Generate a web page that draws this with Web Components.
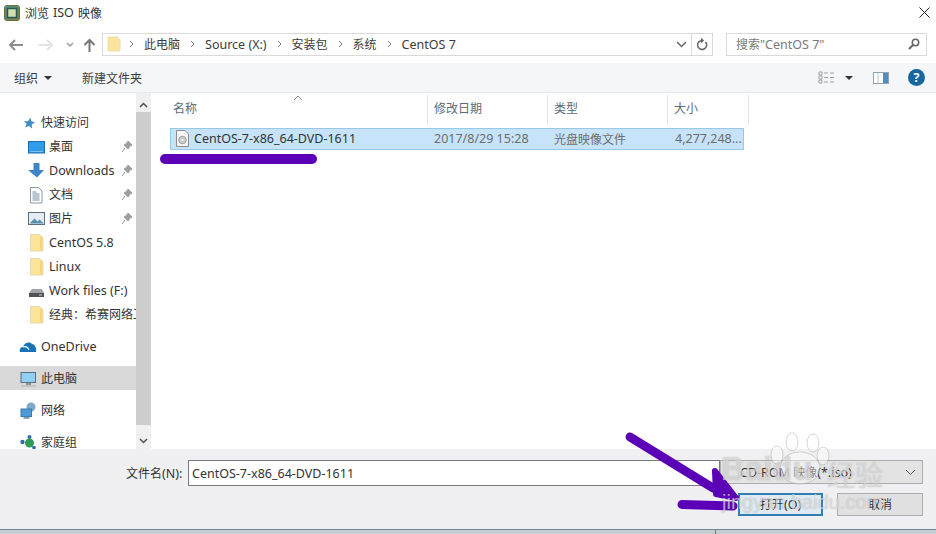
<!DOCTYPE html>
<html lang="zh">
<head>
<meta charset="utf-8">
<title>浏览 ISO 映像</title>
<style>
  html, body { margin: 0; height: 100%; overflow: hidden; background: #fff; }
  body { font: 12.5px "Noto Sans", "Noto Sans CJK SC", sans-serif; color: #333; }
</style>
</head>
<body>
<iso-dialog>
  <title-bar slot="title"></title-bar>
  <address-row slot="address"></address-row>
  <tool-bar slot="tools"></tool-bar>
  <nav-pane slot="nav">
    <nav-item icon="star" top>快速访问</nav-item>
    <nav-item icon="desktop" sub pin>桌面</nav-item>
    <nav-item icon="download" sub pin>Downloads</nav-item>
    <nav-item icon="doc" sub pin>文档</nav-item>
    <nav-item icon="pic" sub pin>图片</nav-item>
    <nav-item icon="folder" sub>CentOS 5.8</nav-item>
    <nav-item icon="folder" sub>Linux</nav-item>
    <nav-item icon="drive" sub>Work files (F:)</nav-item>
    <nav-item icon="folder" sub>经典：希赛网络工程师</nav-item>
    <nav-item icon="cloud" top gap>OneDrive</nav-item>
    <nav-item icon="pc" top gap selected>此电脑</nav-item>
    <nav-item icon="net" top gap>网络</nav-item>
    <nav-item icon="home" top gap>家庭组</nav-item>
  </nav-pane>
  <file-list slot="files"></file-list>
  <footer-bar slot="footer"></footer-bar>
  <mark-up slot="marks"></mark-up>
</iso-dialog>

<script>
const ICONS = {
  star: '<path d="M10.500 3.500l.8 3.700 3.700 1-3.200 2.200.2 4-3-2.400-3.800 1.500 1.400-3.700L4 7l4 .2z" fill="#3f8fc9"/>',
  desktop: '<rect x="-.5" y="3.500" width="16" height="11.500" fill="#2f9be9" stroke="#1f6fae"/><path d="M1 13.500h13" stroke="#7cc0ee"/>',
  download: '<path d="M4.500 1h6v7H15l-7 7.500L-1 8h5.500z" fill="#3c85c6"/>',
  doc: '<path d="M1.500 1.500h8l3.500 3.500v12h-11.500z" fill="#fff" stroke="#8b9aa6"/><path d="M3.500 6h4M3.500 8h7M3.500 10h7M3.500 12h7M3.500 14h7" stroke="#6f8ea5"/>',
  pic: '<rect x="-.5" y="2.500" width="16" height="12" fill="#e4edf3" stroke="#5f6d79"/><path d="M.5 13.500l5-5 3 3 2-2 4.500 4z" fill="#5f8fb0"/>',
  folder: '<path d="M1.500 .5H10l4 3V17H1.500z" fill="#fbe59c" stroke="#e8d8a2"/><path d="M12 3v13" stroke="#f5d67a" stroke-width="2"/>',
  drive: '<path d="M3 7h10l2 4v4H0v-4z" fill="#a0a4a8"/><rect x="0" y="11" width="15" height="4" fill="#4f5357"/><path d="M10 13h3" stroke="#c9ccd0"/>',
  cloud: '<path d="M0 14c-1-3 1-5 3-5 1-4 6-6 9-3 2 0 5 3 4 8z" fill="#1773b8"/><path d="M3 9c3-1 5 0 6 3" stroke="#fff" stroke-width="1.200" fill="none"/>',
  pc: '<rect x="1" y="2.500" width="14.500" height="10" fill="#8fd0f3" stroke="#5a6f80"/><path d="M6 14h5" stroke="#6f7a84" stroke-width="1.500"/><path d="M1 16h15" stroke="#a9b0b6"/>',
  net: '<circle cx="11" cy="5" r="4.500" fill="#7fa9cb"/><rect x="1" y="7" width="10.500" height="7.500" fill="#4d9bd6" stroke="#3a7cae"/><path d="M3.500 16h6" stroke="#63859f" stroke-width="1.500"/>',
  home: '<circle cx="2.500" cy="8" r="2.200" fill="#2f6ea5"/><circle cx="9.500" cy="3" r="2" fill="#2f6ea5"/><circle cx="9.500" cy="9" r="4.500" fill="#2f9b58"/><circle cx="14" cy="13.500" r="1.800" fill="#2f6ea5"/>'
};

class IsoDialog extends HTMLElement {
  constructor() {
    super();
    this.attachShadow({ mode: 'open' });
    this.shadowRoot.innerHTML = `
      <style>
        :host { display: grid; position: relative; width: 936px; height: 534px; overflow: hidden;
          grid-template: 33px 30px 30px 356px 80px 5px / 152px 1fr; }
        ::slotted([slot=title]), ::slotted([slot=address]), ::slotted([slot=tools]), ::slotted([slot=footer]) { grid-column: 1 / 3; }
        .strip { grid-column: 1 / 3; display: grid; grid-template-columns: 715px 1fr;
          background: #c9ccce; border-top: 1px solid #6c8899; box-sizing: border-box; }
        .strip i { border-left: 1px solid #777; grid-column: 2; }
      </style>
      <slot name="title"></slot>
      <slot name="address"></slot>
      <slot name="tools"></slot>
      <slot name="nav"></slot>
      <slot name="files"></slot>
      <slot name="footer"></slot>
      <div class="strip"><i></i></div>
      <slot name="marks"></slot>
    `;
  }
}

class TitleBar extends HTMLElement {
  constructor() {
    super();
    this.attachShadow({ mode: 'open' });
    this.shadowRoot.innerHTML = `
      <style>
        :host { display: flex; align-items: center; height: 25px; padding: 0 6px 0 4px; gap: 5px; color: #333; }
        .name { flex: 1; font-size: 12px; display: flex; gap: 4px; }
        svg { display: block; }
      </style>
      <svg width="16" height="16" viewBox="0 0 16 16">
        <defs><linearGradient id="fr" x1="0" y1="0" x2="1" y2="1"><stop offset="0" stop-color="#3f9a92"/><stop offset="1" stop-color="#8a7a3c"/></linearGradient></defs>
        <rect x=".5" y=".5" width="15" height="15" rx="2.500" fill="url(#fr)" stroke="#6f6a3f"/>
        <rect x="3.500" y="3.500" width="9" height="9" fill="#d4dfb0" stroke="#245a55" stroke-width="1.500"/>
      </svg>
      <div class="name"><span>浏览</span><span style="font-size:12.5px">ISO</span><span>映像</span></div>
      <svg width="11" height="11" viewBox="0 0 11 11"><path d="M.5 .5l10 10M10.500 .5l-10 10" stroke="#222" fill="none"/></svg>
    `;
  }
}

class AddressRow extends HTMLElement {
  constructor() {
    super();
    this.attachShadow({ mode: 'open' });
    const crumbs = ['此电脑', 'Source (X:)', '安装包', '系统', 'CentOS 7'];
    const crumb = c => `<svg width="5" height="8" viewBox="0 0 5 8"><path d="M1 1l3 3-3 3" stroke="#777" fill="none"/></svg><span class="${/[A-Z]/.test(c) ? '' : 'c'}">${c}</span>`;
    this.shadowRoot.innerHTML = `
      <style>
        :host { display: flex; align-items: flex-start; padding: 0 9px 0 8px; box-sizing: border-box; }
        svg { display: block; flex: none; }
        .c { font-size: 12px; }
        .nav { display: flex; align-items: center; height: 23px; width: 94px; flex: none; }
        .box { display: flex; align-items: center; height: 23px; box-sizing: border-box; border: 1px solid #d9d9d9; background: #fff; padding-bottom: 1px; }
        .path { width: 611px; flex: none; padding-left: 4px; }
        .crumbs { flex: 1; display: flex; align-items: center; gap: 10px; margin-left: 8px; color: #3c3c3c; white-space: nowrap; }
        .sep { width: 20px; height: 21px; border-left: 1px solid #d9d9d9; display: flex; align-items: center; justify-content: center; }
        .search { width: 201px; flex: none; margin-left: 13px; padding: 0 6px 1px 9px; color: #7a7a7a; }
        .search span { flex: 1; }
      </style>
      <div class="nav">
        <svg width="16" height="14" viewBox="0 0 16 14" style="margin-right:14px"><path d="M15 7H2M7 2L2 7l5 5" stroke="#8c8c8c" stroke-width="2" fill="none"/></svg>
        <svg width="16" height="14" viewBox="0 0 16 14" style="margin-right:12px"><path d="M1 7h13M9 2l5 5-5 5" stroke="#e2e2e2" stroke-width="2" fill="none"/></svg>
        <svg width="8" height="6" viewBox="0 0 8 6" style="margin-right:9px"><path d="M1 1l3 3 3-3" stroke="#9a9a9a" stroke-width="1.500" fill="none"/></svg>
        <svg width="13" height="14" viewBox="0 0 13 14"><path d="M6.500 14V2M1.500 7l5-5 5 5" stroke="#777" stroke-width="2" fill="none"/></svg>
      </div>
      <div class="box path">
        <svg width="14" height="16" viewBox="0 0 14 16"><path d="M1 1h9l3 3v11H1z" fill="#fbe59c" stroke="#eadba8"/></svg>
        <div class="crumbs">${crumbs.map(crumb).join('')}</div>
        <div class="sep" style="border:0"><svg width="11" height="7" viewBox="0 0 11 7"><path d="M1 1l4.500 4.500L10 1" stroke="#666" stroke-width="1.500" fill="none"/></svg></div>
        <div class="sep"><svg width="12" height="13" viewBox="0 0 12 13"><path d="M9.500 4a4.500 4.500 0 1 1-3-1.500M5 .5l2 2-2 2" stroke="#666" stroke-width="1.500" fill="none"/></svg></div>
      </div>
      <div class="box search">
        <span><span class="c">搜索</span>"CentOS 7"</span>
        <svg width="12" height="12" viewBox="0 0 12 12"><circle cx="7.500" cy="4.500" r="3.200" stroke="#666" stroke-width="1.500" fill="none"/><path d="M5 7l-4 4" stroke="#666" stroke-width="2"/></svg>
      </div>
    `;
  }
}

class ToolBar extends HTMLElement {
  constructor() {
    super();
    this.attachShadow({ mode: 'open' });
    this.shadowRoot.innerHTML = `
      <style>
        :host { display: flex; align-items: center; background: #f5f6f7; border-bottom: 1px solid #e8e9ea; box-sizing: border-box; padding: 0 11px 0 14px; font-size: 12px; color: #3c3c3c; }
        .caret { width: 0; height: 0; border: 4px solid transparent; border-top: 4px solid #333; border-bottom: 0; }
        svg { display: block; }
      </style>
      <span>组织</span>
      <i class="caret" style="margin-left:6px"></i>
      <span style="margin-left:30px;flex:1">新建文件夹</span>
      <svg width="17" height="13" viewBox="0 0 17 13"><path d="M1 1h3v3H1zM1 5h3v3H1zM1 9h3v3H1z" fill="#fff" stroke="#9aa2a8"/><path d="M6 2h4M12 2h4M6 6.500h4M12 6.500h4M6 11h4M12 11h4" stroke="#9aa2a8"/></svg>
      <i class="caret" style="margin:0 20px 0 10px"></i>
      <svg width="16" height="12" viewBox="0 0 16 12"><rect x=".5" y=".5" width="15" height="11" fill="#fff" stroke="#8ea3b3"/><rect x="10" y="1" width="5" height="10" fill="#4a90c8"/><path d="M5 1v10" stroke="#b6c2cb"/></svg>
      <svg width="17" height="17" viewBox="0 0 17 17" style="margin-left:19px"><circle cx="8.500" cy="8.500" r="8.500" fill="#17669f"/><text x="8.500" y="13" text-anchor="middle" font-size="12.500" font-weight="700" font-family="Noto Sans" fill="#fff">?</text></svg>
    `;
  }
}

class NavPane extends HTMLElement {
  constructor() {
    super();
    this.attachShadow({ mode: 'open' });
    this.shadowRoot.innerHTML = `
      <style>
        :host { display: flex; overflow: hidden; height: 356px; }
        .list { width: 136px; flex: none; padding-top: 17px; box-sizing: border-box; overflow: hidden; }
        .bar { width: 15px; flex: none; background: #f0f0f0; display: flex; flex-direction: column; align-items: center; }
        .arrow { flex: none; display: flex; align-items: center; justify-content: center; }
        .thumb { flex: 1; width: 100%; background: #cdcdcd; }
        svg { display: block; }
      </style>
      <div class="list"><slot></slot></div>
      <div class="bar">
        <div class="arrow" style="height:15px;padding-top:4px"><svg width="9" height="6" viewBox="0 0 9 6"><path d="M1 5l3.500-3.500L8 5" stroke="#505050" stroke-width="1.500" fill="none"/></svg></div>
        <div class="thumb"></div>
        <div class="arrow" style="height:17px;padding-top:7px"><svg width="9" height="6" viewBox="0 0 9 6"><path d="M1 1l3.500 3.500L8 1" stroke="#505050" stroke-width="1.500" fill="none"/></svg></div>
      </div>
    `;
  }
}

class NavItem extends HTMLElement {
  constructor() {
    super();
    this.attachShadow({ mode: 'open' });
  }
  connectedCallback() {
    const pin = this.hasAttribute('pin')
      ? '<svg class="pin" width="10" height="11" viewBox="0 0 10 11"><path d="M6 0l4 4-2 1-2 3-4-4 3-2zM3 7L0 11" fill="#9aa0a6" stroke="#9aa0a6"/></svg>'
      : '';
    // chinese labels sit a bit smaller than latin ones in the reference
    const cjk = !/[A-Za-z]/.test(this.textContent);
    this.shadowRoot.innerHTML = `
      <style>
        :host { display: flex; align-items: center; height: 24px; white-space: nowrap; color: #333; overflow: hidden; position: relative; }
        :host([top]) { padding-left: 20px; }
        :host([sub]) { padding-left: 29px; }
        :host([gap]) { margin-top: 8px; }
        :host([selected]) { background: #d9d9d9; }
        :host([top]) .label { margin-left: 5px; }
        svg { display: block; flex: none; overflow: visible; }
        .label { margin-left: 4px; flex: 1; overflow: hidden; }
        .cjk { font-size: 12px; padding-bottom: 1px; }
        .pin { margin-right: 4px; margin-left: 2px; }
      </style>
      <svg width="16" height="16" viewBox="0 0 16 16">${ICONS[this.getAttribute('icon')]}</svg>
      <span class="label ${cjk ? 'cjk' : ''}"><slot></slot></span>${pin}
    `;
  }
}

class FileList extends HTMLElement {
  constructor() {
    super();
    this.attachShadow({ mode: 'open' });
    this.shadowRoot.innerHTML = `
      <style>
        :host { display: block; position: relative; height: 356px; background: #fff; color: #6d6d6d; }
        .c { font-size: 12px; }
        .cols { display: grid; grid-template-columns: 276px 120px 120px 81px; }
        .head { height: 30px; color: #5c6b78; position: relative; font-size: 12px; }
        .head span { height: 100%; margin-top: 2px; line-height: 27px; padding-left: 6px; border-right: 1px solid #e5e5e5; box-sizing: border-box; }
        .head span:first-child { padding-left: 21px; }
        .sort { position: absolute; left: 141px; top: 2px; }
        .row { width: 574px; height: 22px; margin: 5px 0 0 18px; box-sizing: border-box; align-items: center; padding-bottom: 1px;
          background: #c6e3f9; border: 1px solid #97c8e8; grid-template-columns: 257px 120px 121px 1fr; }
        .row span { padding-left: 6px; white-space: nowrap; }
        .row span:first-child { display: flex; align-items: center; gap: 5px; color: #333; padding-left: 5px; }
        svg { display: block; }
      </style>
      <div class="cols head">
        <span>名称</span><span>修改日期</span><span>类型</span><span>大小</span>
        <svg class="sort" width="10" height="6" viewBox="0 0 10 6"><path d="M1 5l4-4 4 4" stroke="#8a8a8a" fill="none"/></svg>
      </div>
      <div class="cols row">
        <span>
          <svg width="13" height="17" viewBox="0 0 13 17"><path d="M.5 .5h8.500L12.500 4v12.500H.5z" fill="#f6f6f6" stroke="#8d8d8d"/><circle cx="6.500" cy="10" r="3.800" fill="#c9cacb" stroke="#a4a4a4"/><circle cx="6.500" cy="10" r="1" fill="#fff"/></svg>
          CentOS-7-x86_64-DVD-1611
        </span>
        <span>2017/8/29 15:28</span><span class="c">光盘映像文件</span><span>4,277,248...</span>
      </div>
    `;
  }
}

class FooterBar extends HTMLElement {
  constructor() {
    super();
    this.attachShadow({ mode: 'open' });
    this.shadowRoot.innerHTML = `
      <style>
        :host { display: block; background: #f0f0f2; box-sizing: border-box; padding: 11px 13px 0 126px; color: #333; }
        .c { font-size: 12px; }
        .name { display: flex; align-items: center; height: 25px; }
        label { width: 62px; flex: none; white-space: nowrap; }
        .field { width: 532px; flex: none; height: 26px; box-sizing: border-box; border: 1px solid #7a7a7a; background: #fff; padding: 0 3px; line-height: 25px; }
        .filter { flex: 1; height: 24px; box-sizing: border-box; border: 1px solid #aeaeae; background: #e3e3e3; display: flex; align-items: center; justify-content: space-between; padding: 0 6px 0 19px; margin-top: -1px; }
        .actions { display: flex; justify-content: flex-end; gap: 14px; margin-top: 8px; }
        .btn { height: 23px; box-sizing: border-box; border: 1px solid #adadad; background: #e1e1e1; text-align: center; line-height: 21px; width: 86px; }
        .default { width: 85px; border: 2px solid #2f7fb5; background: #dfeaf2; line-height: 19px; }
        svg { display: block; }
      </style>
      <div class="name">
        <label><span class="c">文件名</span>(N):</label>
        <div class="field">CentOS-7-x86_64-DVD-1611</div>
        <div class="filter">
          <span>CD-ROM <span class="c">映像</span>(*.iso)</span>
          <svg width="11" height="7" viewBox="0 0 11 7"><path d="M1 1l4.500 4.500L10 1" stroke="#555" fill="none"/></svg>
        </div>
      </div>
      <div class="actions">
        <div class="btn default"><span class="c">打开</span>(O)</div>
        <div class="btn c">取消</div>
      </div>
    `;
  }
}

class MarkUp extends HTMLElement {
  constructor() {
    super();
    this.attachShadow({ mode: 'open' });
    this.shadowRoot.innerHTML = `
      <style>
        :host { position: absolute; inset: 0; pointer-events: none; display: block; }
        svg { position: absolute; inset: 0; }
        .wm { position: absolute; color: rgba(255,255,255,.55); white-space: nowrap; font-family: "Liberation Sans", "Noto Sans CJK SC", sans-serif;
          text-shadow: 0 0 1px rgba(100,100,100,.5); }
        .bai { left: 721px; top: 450px; font-size: 33px; font-weight: 700; }
        .jy { left: 827px; top: 454px; font-size: 28px; }
        .url { left: 722px; top: 491px; font-size: 20px; }
      </style>
      <svg width="936" height="534" viewBox="0 0 936 534">
        <path d="M165 159H312" stroke="#5c00b8" stroke-width="10" stroke-linecap="round" fill="none"/>
        <path d="M630 437L713 488" stroke="#5c00b8" stroke-width="9" stroke-linecap="round" fill="none"/>
        <path d="M715 471l21 27-20-4z" stroke="#5c00b8" stroke-width="6" stroke-linejoin="round" fill="#5c00b8"/>
        <path d="M682 504.500L733 506" stroke="#5c00b8" stroke-width="9" stroke-linecap="round" fill="none"/>
        <g fill="rgba(255,255,255,.42)" stroke="rgba(120,120,120,.3)">
          <ellipse cx="800" cy="468" rx="20" ry="16"/>
          <ellipse cx="777" cy="455" rx="6" ry="9"/>
          <ellipse cx="792" cy="442" rx="6" ry="9"/>
          <ellipse cx="813" cy="443" rx="6" ry="9"/>
          <ellipse cx="823" cy="456" rx="6" ry="9"/>
        </g>
      </svg>
      <span class="wm bai">Baidu</span>
      <span class="wm jy">经验</span>
      <span class="wm url">jingyan.baidu.com</span>
    `;
  }
}

customElements.define('iso-dialog', IsoDialog);
customElements.define('title-bar', TitleBar);
customElements.define('address-row', AddressRow);
customElements.define('tool-bar', ToolBar);
customElements.define('nav-pane', NavPane);
customElements.define('nav-item', NavItem);
customElements.define('file-list', FileList);
customElements.define('footer-bar', FooterBar);
customElements.define('mark-up', MarkUp);
</script>
</body>
</html>
